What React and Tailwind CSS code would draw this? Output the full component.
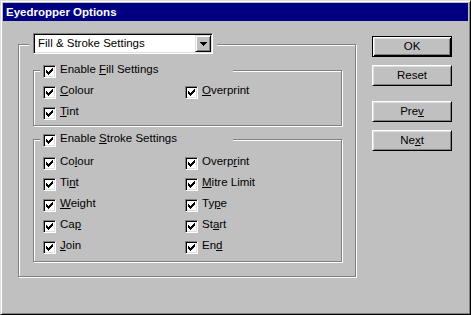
import clsx from 'clsx';

const FILL_ROWS = [
  ['&Colour', '&Overprint'],
  ['&Tint', null],
];

const STROKE_ROWS = [
  ['Co&lour', 'Overp&rint'],
  ['Ti&nt', '&Mitre Limit'],
  ['&Weight', 'Ty&pe'],
  ['Ca&p', 'St&art'],
  ['&Join', 'En&d'],
];

// "&" marks the accelerator letter, like the Win32 resource strings
function Mnemonic({ text }) {
  const i = text.indexOf('&');
  if (i < 0) return text;
  return (
    <>
      {text.slice(0, i)}
      <u className="underline-offset-[1px]">{text[i + 1]}</u>
      {text.slice(i + 2)}
    </>
  );
}

function CheckMark() {
  return (
    <svg width="7" height="7" viewBox="0 0 7 7" shapeRendering="crispEdges">
      <path
        fill="#000"
        d="M6 0h1v1H6zM5 1h2v1H5zM0 2h1v1H0zM4 2h3v1H4zM0 3h2v1H0zM3 3h3v1H3zM0 4h5v1H0zM1 5h3v1H1zM2 6h1v1H2z"
      />
    </svg>
  );
}

function CheckBox() {
  return (
    <span className="flex items-center justify-center w-[13px] h-[13px] shrink-0 bg-white border border-[#808080] border-r-white border-b-white shadow-[inset_1px_1px_0_#000,inset_-1px_-1px_0_#dfdfdf]">
      <CheckMark />
    </span>
  );
}

function CheckRow({ label }) {
  return (
    <div className="flex items-start gap-[4px] h-[13px]">
      <CheckBox />
      <span className="leading-[11px] -mt-px whitespace-nowrap">
        <Mnemonic text={label} />
      </span>
    </div>
  );
}

function GroupBox({ legend, rows, className }) {
  return (
    <div
      className={clsx(
        'relative w-[309px] pl-[9px] border border-[#808080] shadow-[inset_1px_1px_0_#fff,1px_1px_0_#fff]',
        className,
      )}
    >
      {/* legend sits on the top line */}
      <div className="absolute left-[6px] -top-[6px] w-[193px] pl-[3px] bg-[#c0c0c0]">
        <CheckRow label={legend} />
      </div>
      <div className="grid grid-cols-[142px_1fr] gap-y-[8px]">
        {rows.map(([left, right]) => (
          <div key={left} className="contents">
            <CheckRow label={left} />
            {right ? <CheckRow label={right} /> : <div />}
          </div>
        ))}
      </div>
    </div>
  );
}

function ComboBox({ value }) {
  return (
    <div className="flex items-center w-[180px] h-[21px] bg-white border border-[#808080] border-r-white border-b-white shadow-[inset_1px_1px_0_#000,inset_-1px_-1px_0_#dfdfdf] p-[1px]">
      <span className="flex-1 pl-[3px] leading-[13px] whitespace-nowrap">{value}</span>
      <span className="flex items-center justify-center w-[16px] h-[17px] bg-[#c0c0c0] border border-[#dfdfdf] border-r-black border-b-black shadow-[inset_1px_1px_0_#fff,inset_-1px_-1px_0_#808080]">
        <svg width="7" height="4" viewBox="0 0 7 4" shapeRendering="crispEdges">
          <path fill="#000" d="M0 0h7v1H0zM1 1h5v1H1zM2 2h3v1H2zM3 3h1v1H3z" />
        </svg>
      </span>
    </div>
  );
}

function Button({ label, isDefault, className }) {
  return (
    <button
      type="button"
      className={clsx(
        'flex items-center justify-center w-[80px] h-[21px] bg-[#c0c0c0] text-black leading-[13px]',
        isDefault
          ? 'border border-black shadow-[inset_1px_1px_0_#fff,inset_-1px_-1px_0_#000,inset_2px_2px_0_#dfdfdf,inset_-2px_-2px_0_#808080]'
          : 'border border-white border-r-black border-b-black shadow-[inset_1px_1px_0_#dfdfdf,inset_-1px_-1px_0_#808080]',
        className,
      )}
    >
      <span>
        <Mnemonic text={label} />
      </span>
    </button>
  );
}

export default function App() {
  return (
    <div className="w-[471px] h-[315px] p-[2px] bg-[#c0c0c0] border border-[#dfdfdf] border-r-black border-b-black shadow-[inset_1px_1px_0_#fff,inset_-1px_-1px_0_#808080] text-[11.5px] text-black font-['Liberation_Sans',Arial,sans-serif] overflow-hidden">
      <div className="flex items-center h-[18px] pl-[3px] bg-[#000080] text-white font-bold leading-[13px]">
        Eyedropper Options
      </div>

      <div className="flex pl-[15px]">
        {/* main options frame */}
        <div className="relative mt-[23px] w-[338px] h-[233px] pt-[25px] pl-[14px] border border-[#808080] shadow-[inset_1px_1px_0_#fff,1px_1px_0_#fff]">
          <div className="absolute left-[10px] -top-[12px] px-[4px] bg-[#c0c0c0]">
            <ComboBox value="Fill & Stroke Settings" />
          </div>

          <GroupBox
            legend="Enable &Fill Settings"
            rows={FILL_ROWS}
            className="h-[56px] pt-[15px]"
          />
          <GroupBox
            legend="Enable &Stroke Settings"
            rows={STROKE_ROWS}
            className="mt-[13px] h-[123px] pt-[17px]"
          />
        </div>

        <div className="flex flex-col ml-[16px] mt-[15px]">
          <Button label="OK" isDefault />
          <Button label="Reset" className="mt-[8px]" />
          <Button label="Pre&v" className="mt-[15px]" />
          <Button label="Ne&xt" className="mt-[8px]" />
        </div>
      </div>
    </div>
  );
}
